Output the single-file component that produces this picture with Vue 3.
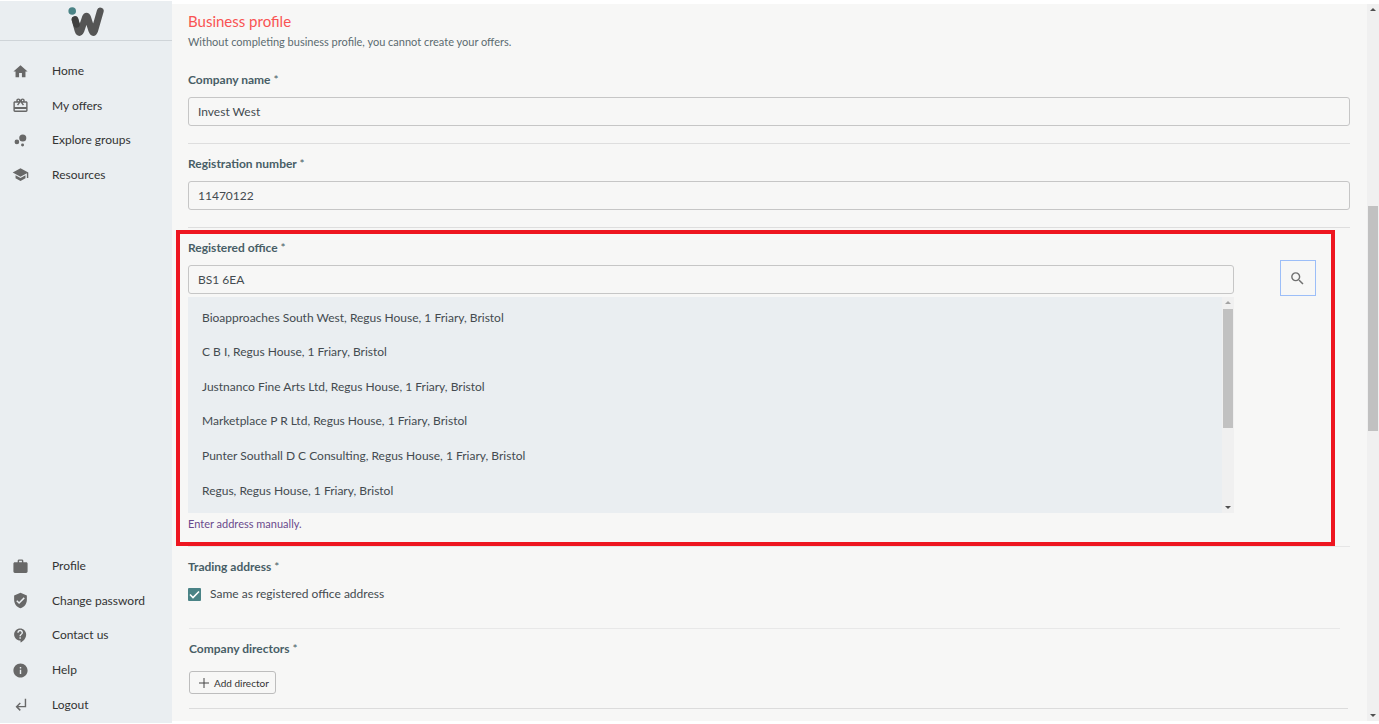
<script setup>
import { ref } from 'vue'

const mainLinks = [
  { label: 'Home', icon: 'M10 20v-6h4v6h5v-8h3L12 3 2 12h3v8z' },
  { label: 'My offers', icon: 'M20 6h-2.18c.11-.31.18-.65.18-1 0-1.66-1.34-3-3-3-1.05 0-1.96.54-2.5 1.35l-.5.67-.5-.68C10.96 2.54 10.05 2 9 2 7.34 2 6 3.34 6 5c0 .35.07.69.18 1H4c-1.11 0-1.99.89-1.99 2L2 19c0 1.11.89 2 2 2h16c1.11 0 2-.89 2-2V8c0-1.11-.89-2-2-2zm-5-2c.55 0 1 .45 1 1s-.45 1-1 1-1-.45-1-1 .45-1 1-1zM9 4c.55 0 1 .45 1 1s-.45 1-1 1-1-.45-1-1 .45-1 1-1zm11 15H4v-2h16v2zm0-5H4V8h5.08L7 10.83 8.62 12 11 8.76l1-1.36 1 1.36L15.38 12 17 10.83 14.92 8H20v6z' },
  { label: 'Explore groups', icon: 'M3.6 14a3.3 3.3 0 1 0 6.6 0a3.3 3.3 0 1 0 -6.6 0zM12.8 18.2a2.1 2.1 0 1 0 4.2 0a2.1 2.1 0 1 0 -4.2 0zM10.200 8.500a5 5 0 1 0 10 0a5 5 0 1 0 -10 0z' },
  { label: 'Resources', icon: 'M5 13.18v4L12 21l7-3.82v-4L12 17l-7-3.82zM12 3L1 9l11 6 9-4.91V17h2V9L12 3z' },
]

const accountLinks = [
  { label: 'Profile', icon: 'M20 6h-4V4c0-1.11-.89-2-2-2h-4c-1.11 0-2 .89-2 2v2H4c-1.11 0-1.99.89-1.99 2L2 19c0 1.11.89 2 2 2h16c1.11 0 2-.89 2-2V8c0-1.11-.89-2-2-2zm-6 0h-4V4h4v2z' },
  { label: 'Change password', icon: 'M12 1L3 5v6c0 5.55 3.84 10.74 9 12 5.16-1.26 9-6.45 9-12V5l-9-4zm-2 16l-4-4 1.41-1.41L10 14.17l6.59-6.59L18 9l-8 8z' },
  { label: 'Contact us', icon: 'M11.5 2C6.81 2 3 5.81 3 10.5S6.81 19 11.5 19h.5v3c4.86-2.34 8-7 8-11.5C20 5.81 16.19 2 11.5 2zm1 14.5h-2v-2h2v2zm0-3.5h-2c0-3.25 3-3 3-5 0-1.1-.9-2-2-2s-2 .9-2 2h-2c0-2.21 1.79-4 4-4s4 1.79 4 4c0 2.5-3 2.75-3 5z' },
  { label: 'Help', icon: 'M12 2C6.48 2 2 6.48 2 12s4.48 10 10 10 10-4.48 10-10S17.52 2 12 2zm1 15h-2v-6h2v6zm0-8h-2V7h2v2z' },
  { label: 'Logout', icon: 'M11 9l1.420 1.420L8.830 14H18V4h2v12H8.830l3.590 3.580L11 21l-6-6 6-6z' },
]

const companyName = ref('Invest West')
const registrationNumber = ref('11470122')
const postcode = ref('BS1 6EA')
const sameAddress = ref(true)

const addresses = [
  'Bioapproaches South West, Regus House, 1 Friary, Bristol',
  'C B I, Regus House, 1 Friary, Bristol',
  'Justnanco Fine Arts Ltd, Regus House, 1 Friary, Bristol',
  'Marketplace P R Ltd, Regus House, 1 Friary, Bristol',
  'Punter Southall D C Consulting, Regus House, 1 Friary, Bristol',
  'Regus, Regus House, 1 Friary, Bristol',
]
</script>

<template>
  <div class="page">
    <aside class="sidebar">
      <div class="brand">
        <svg class="logo" viewBox="0 0 36 30" role="img" aria-label="Invest West">
          <path d="M7 12.500L10 23.500Q11.300 27.500 13 23.500L17.200 11Q18.500 7.500 19.800 11L23.800 23.500Q25.200 27.500 26.700 23.500L32.300 4" fill="none" stroke="#555" stroke-width="6.800" stroke-linecap="round" stroke-linejoin="round" />
          <path d="M7 12.500L8.500 17.500" fill="none" stroke="#3f3f3f" stroke-width="6.500" stroke-linecap="round" />
          <circle cx="4.200" cy="4" r="3.800" fill="#4a8386" />
        </svg>
      </div>
      <nav class="nav nav-main" aria-label="Main">
        <a v-for="item in mainLinks" :key="item.label" href="#" class="nav-link">
          <svg class="nav-icon" viewBox="0 0 24 24" aria-hidden="true"><path :d="item.icon" /></svg>
          <span>{{ item.label }}</span>
        </a>
      </nav>
      <nav class="nav nav-account" aria-label="Account">
        <a v-for="item in accountLinks" :key="item.label" href="#" class="nav-link">
          <svg class="nav-icon" viewBox="0 0 24 24" aria-hidden="true"><path :d="item.icon" /></svg>
          <span>{{ item.label }}</span>
        </a>
      </nav>
    </aside>

    <main class="content">
      <header class="intro">
        <h1>Business profile</h1>
        <p>Without completing business profile, you cannot create your offers.</p>
      </header>

      <section class="field">
        <label class="label" for="company">Company name <span class="star">*</span></label>
        <input id="company" v-model="companyName" class="input" type="text" />
      </section>

      <section class="field">
        <label class="label" for="regno">Registration number <span class="star">*</span></label>
        <input id="regno" v-model="registrationNumber" class="input" type="text" />
      </section>

      <section class="field office">
        <div class="lookup">
          <label class="label" for="postcode">Registered office <span class="star">*</span></label>
          <input id="postcode" v-model="postcode" class="input" type="text" />
          <div class="results">
            <ul class="options">
              <li v-for="a in addresses" :key="a">{{ a }}</li>
            </ul>
            <div class="scroll list-scroll" aria-hidden="true">
              <i class="arrow up dim"></i>
              <i class="thumb"></i>
              <i class="arrow down"></i>
            </div>
          </div>
          <a class="manual" href="#">Enter address manually.</a>
        </div>
        <button class="search" type="button" aria-label="Search">
          <svg viewBox="0 0 24 24" aria-hidden="true"><path d="M15.500 14h-.79l-.28-.27A6.471 6.471 0 0 0 16 9.500 6.500 6.500 0 1 0 9.500 16c1.610 0 3.090-.59 4.230-1.570l.27.28v.79l5 4.990L20.490 19l-4.990-5zm-6 0C7.010 14 5 11.990 5 9.500S7.010 5 9.500 5 14 7.010 14 9.500 11.990 14 9.500 14z" /></svg>
        </button>
        <div class="highlight" aria-hidden="true"></div>
      </section>

      <section class="trading">
        <div class="label">Trading address <span class="star">*</span></div>
        <label class="check" for="same">
          <input id="same" v-model="sameAddress" type="checkbox" />
          <span>Same as registered office address</span>
        </label>
      </section>

      <section class="directors">
        <div class="label">Company directors <span class="star">*</span></div>
        <button class="add" type="button">
          <svg viewBox="0 0 10 10" aria-hidden="true"><path d="M5 0v10M0 5h10" /></svg>
          Add director
        </button>
      </section>
    </main>

    <div class="scroll page-scroll" aria-hidden="true">
      <i class="arrow up"></i>
      <i class="thumb"></i>
      <i class="arrow down"></i>
    </div>
  </div>
</template>

<style>
body {
  margin: 0;
  background: #fff;
}
</style>

<style scoped>
.page {
  box-sizing: border-box;
  display: flex;
  min-height: 100vh;
  font-family: Lato, "Open Sans", sans-serif;
  font-size: 12px;
  line-height: 20px;
  color: #444b50;
}

.sidebar {
  display: flex;
  flex-direction: column;
  flex: 0 0 172px;
  margin: 1px 0;
  background: #eaeef1;
}

.brand {
  display: flex;
  justify-content: center;
  height: 39px;
  border-bottom: 1px solid #cfd4d8;
}

.logo {
  width: 36px;
  height: 30px;
  margin-top: 6px;
}

.nav {
  display: grid;
  grid-auto-rows: 1fr;
}

.nav-main {
  height: 138px;
  margin-top: 13px;
}

.nav-account {
  height: 173px;
  margin-top: auto;
  margin-bottom: 1px;
}

.nav-link {
  display: flex;
  align-items: center;
  gap: 23px;
  padding-left: 12px;
  color: #333;
  text-decoration: none;
}

.nav-icon {
  width: 17px;
  height: 17px;
  fill: #686868;
}

.content {
  flex: 1;
  min-width: 0;
  margin: 4px 0 3px;
  padding: 6px 17px 0 16px;
  background: #f7f7f6;
}

.intro {
  padding-bottom: 8px;
}

h1 {
  margin: 0;
  font-size: 15px;
  font-weight: 400;
  line-height: 22px;
  color: #f95353;
}

p {
  margin: 0;
  font-size: 11px;
  color: #5b6b70;
}

.field {
  padding: 10px 0 17px;
  border-bottom: 1px solid #dedede;
}

.label {
  display: block;
  font-weight: 700;
  color: #485e66;
}

.star {
  font-weight: 400;
}

.input {
  box-sizing: border-box;
  display: block;
  width: 100%;
  height: 29px;
  margin-top: 7px;
  padding: 0 9px;
  border: 1px solid #c6c6c6;
  border-radius: 3px;
  background: transparent;
  font: inherit;
  color: #444b50;
}

.office {
  position: relative;
  display: grid;
  grid-template-columns: 9fr 1fr;
  align-items: start;
  padding-bottom: 12px;
  border-color: #e6e6e6;
}

.results {
  display: flex;
  height: 216px;
  margin: 3px 0 1px;
  background: #eaeef1;
}

.options {
  display: grid;
  grid-auto-rows: 16%;
  flex: 1;
  margin: 0;
  padding: 0 14px;
  list-style: none;
}

.options li {
  display: flex;
  align-items: center;
  padding-top: 7px;
}

.manual {
  display: block;
  width: max-content;
  font-size: 11px;
  color: #6a4a8c;
  text-decoration: none;
}

.search {
  display: flex;
  align-items: center;
  justify-content: center;
  justify-self: end;
  width: 36px;
  height: 36px;
  margin: 22px 34px 0 0;
  padding: 0;
  border: 1px solid #9cbef8;
  background: transparent;
}

.search svg {
  width: 17px;
  height: 17px;
  fill: #707070;
}

.highlight {
  position: absolute;
  inset: 2px 15px 0 -12px;
  border: 4px solid #ee1620;
  pointer-events: none;
}

.trading {
  padding: 10px 0 24px;
}

.check {
  display: flex;
  align-items: center;
  gap: 9px;
  width: max-content;
  margin-top: 7px;
}

.check input {
  appearance: none;
  width: 13px;
  height: 13px;
  margin: 0;
  border-radius: 1px;
  background: #4a8386;
}

.check input:checked {
  background: #4a8386 url("data:image/svg+xml,%3Csvg xmlns='http://www.w3.org/2000/svg' viewBox='0 0 13 13'%3E%3Cpath d='M2 6.500L5 9.500L11 3.500' fill='none' stroke='white' stroke-width='1.600'/%3E%3C/svg%3E");
}

.directors {
  margin: 0 2px 0 1px;
  padding-bottom: 14px;
  border-bottom: 1px solid #dcdcdc;
}

.directors::before {
  content: "";
  display: block;
  margin: 0 8px 10px 0;
  border-top: 1px solid #e8e8e8;
}

.add {
  display: flex;
  align-items: center;
  gap: 5px;
  height: 23px;
  margin-top: 12px;
  padding: 0 6px 0 9px;
  border: 1px solid #bdbdbd;
  border-radius: 3px;
  background: transparent;
  font: inherit;
  font-size: 10px;
  color: #333;
}

.add svg {
  width: 10px;
  height: 10px;
  fill: none;
  stroke: #444;
}

.scroll {
  display: flex;
  flex-direction: column;
  align-items: center;
  flex: 0 0 12px;
  background: #f0f0f0;
}

.page-scroll {
  margin: 4px 0 3px;
}

.list-scroll {
  flex-basis: 12px;
}

.arrow {
  flex: none;
  border: 3px solid transparent;
}

.arrow.up {
  margin-top: 1px;
  border-bottom-color: #505050;
}

.arrow.up.dim {
  border-bottom-color: #a3a3a3;
}

.arrow.down {
  margin-top: auto;
  margin-bottom: 1px;
  border-top-color: #505050;
}

.thumb {
  width: 10px;
  background: #c1c1c1;
}

.page-scroll .thumb {
  height: 31.400%;
  margin-top: 195px;
}

.list-scroll .thumb {
  height: 55%;
  margin-top: 5px;
}
</style>
